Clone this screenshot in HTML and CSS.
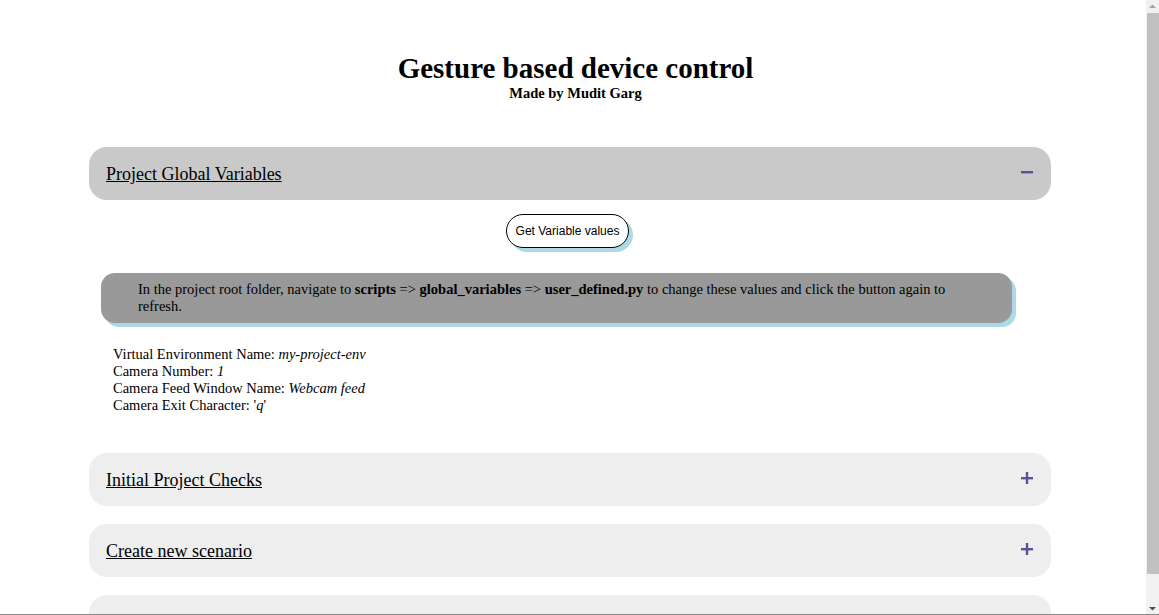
FILE: index.html
```html
<!DOCTYPE html>
<html lang="en">
<head>
<meta charset="utf-8">
<title>Gesture based device control</title>
<link rel="stylesheet" href="styles.css">
</head>
<body>
<header class="page-header">
  <h1 class="title">Gesture based device control</h1>
  <p class="subtitle">Made by Mudit Garg</p>
</header>
<main class="accordion">
  <section class="acc-item open">
    <div class="acc-head">
      <span class="acc-title">Project Global Variables</span>
      <svg class="acc-icon" width="12" height="12" viewBox="0 0 12 12"><rect x="0" y="5" width="12" height="2.4" fill="#5b5099"/></svg>
    </div>
    <div class="acc-body">
      <div class="btn-row"><button class="btn">Get Variable values</button></div>
      <div class="note">In the project root folder, navigate to <b>scripts</b> =&gt; <b>global_variables</b> =&gt; <b>user_defined.py</b> to change these values and click the button again to refresh.</div>
      <div class="vars">
        <div>Virtual Environment Name: <i>my-project-env</i></div>
        <div>Camera Number: <i>1</i></div>
        <div>Camera Feed Window Name: <i>Webcam feed</i></div>
        <div>Camera Exit Character: '<i>q</i>'</div>
      </div>
    </div>
  </section>
  <section class="acc-item">
    <div class="acc-head">
      <span class="acc-title">Initial Project Checks</span>
      <svg class="acc-icon" width="12" height="12" viewBox="0 0 12 12"><rect x="0" y="5" width="12" height="2.4" fill="#5b5099"/><rect x="4.8" y="0" width="2.4" height="12" fill="#5b5099"/></svg>
    </div>
  </section>
  <section class="acc-item">
    <div class="acc-head">
      <span class="acc-title">Create new scenario</span>
      <svg class="acc-icon" width="12" height="12" viewBox="0 0 12 12"><rect x="0" y="5" width="12" height="2.4" fill="#5b5099"/><rect x="4.8" y="0" width="2.4" height="12" fill="#5b5099"/></svg>
    </div>
  </section>
  <section class="acc-item">
    <div class="acc-head">
      <span class="acc-title">Run scenario</span>
      <svg class="acc-icon" width="12" height="12" viewBox="0 0 12 12"><rect x="0" y="5" width="12" height="2.4" fill="#5b5099"/><rect x="4.8" y="0" width="2.4" height="12" fill="#5b5099"/></svg>
    </div>
  </section>
</main>
<div class="scrollbar" aria-hidden="true">
  <svg class="sb-arrow" width="13" height="13" viewBox="0 0 13 13"><path d="M3 8h7L6.5 4.5z" fill="#a3a3a3"/></svg>
  <div class="sb-track"><div class="sb-thumb"></div></div>
  <svg class="sb-arrow" width="13" height="13" viewBox="0 0 13 13"><path d="M3 5h7L6.5 8.5z" fill="#505050"/></svg>
</div>
<div class="frame-line" aria-hidden="true"></div>
</body>
</html>
```

FILE: styles.css
```css
html, body {
  margin: 0;
  padding: 0;
}
body {
  font-family: "Liberation Serif", "Times New Roman", serif;
  color: #000;
  background: #fff;
  padding: 0 16px 8px 8px;
}
.page-header {
  text-align: center;
  padding-top: 52px;
}
.title {
  font-size: 29px;
  font-weight: bold;
  margin: 0;
  line-height: 33px;
}
.subtitle {
  font-size: 14.5px;
  font-weight: bold;
  margin: 0;
  line-height: 16px;
}
.accordion {
  margin: 46px 0 0 81px;
  width: 962px;
  display: flex;
  flex-direction: column;
  gap: 18px;
}
.acc-head {
  height: 53px;
  box-sizing: border-box;
  background: #eeeeee;
  border-radius: 18px;
  display: flex;
  align-items: center;
  justify-content: space-between;
  padding: 0 18px 0 17px;
}
.acc-item.open .acc-head {
  background: #c9c9c9;
}
.acc-title {
  font-size: 18px;
  text-decoration: underline;
  padding-top: 2px;
}
.acc-icon {
  display: block;
  margin-top: -4px;
}
.acc-body {
  padding: 14px 0 21px;
}
.btn-row {
  display: flex;
  justify-content: center;
  padding-right: 5px;
}
.btn {
  font-family: "Liberation Sans", Arial, sans-serif;
  font-size: 12px;
  background: #fff;
  color: #000;
  border: 1px solid #000;
  border-radius: 18px;
  height: 34px;
  padding: 0 9px;
  margin: 0;
  box-shadow: 4px 4px 0 #add8e6;
}
.note {
  margin: 25px 0 0 12px;
  width: 911px;
  box-sizing: border-box;
  background: #999999;
  border-radius: 14px;
  box-shadow: 4px 4px 0 #add8e6;
  padding: 8px 50px 8px 37px;
  font-size: 14.5px;
  line-height: 17px;
  min-height: 50px;
}
.vars {
  margin: 23px 0 0 24px;
  font-size: 14.5px;
  line-height: 17px;
}
.scrollbar {
  position: fixed;
  top: 0;
  right: 0;
  width: 13px;
  height: 100vh;
  background: #f1f1f1;
  display: flex;
  flex-direction: column;
}
.sb-arrow {
  display: block;
  flex: none;
}
.sb-track {
  flex: 1;
  padding: 0 0 28px 1px;
}
.sb-thumb {
  height: 100%;
  width: 12px;
  background: #c1c1c1;
}
.frame-line {
  position: fixed;
  left: 0;
  right: 0;
  bottom: 0;
  height: 1px;
  background: #8a8a8a;
}
```
